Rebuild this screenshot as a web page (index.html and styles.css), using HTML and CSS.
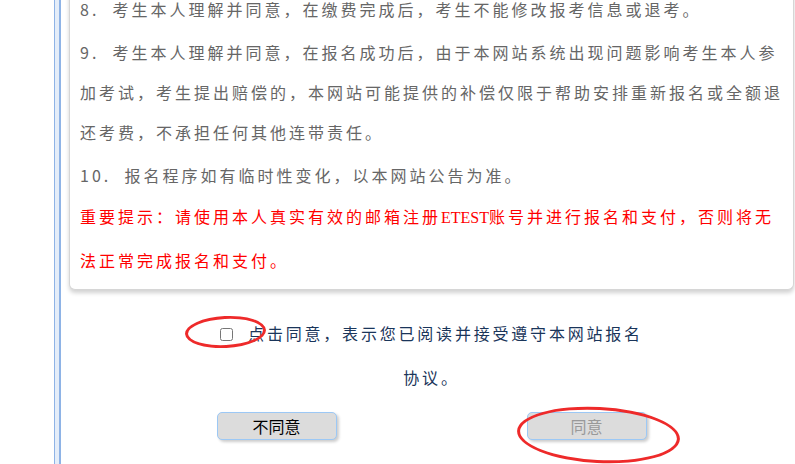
FILE: index.html
```html
<!DOCTYPE html>
<html lang="zh-CN">
<head>
<meta charset="UTF-8">
<title>报名协议</title>
<link rel="stylesheet" href="styles.css">
</head>
<body>
<div class="layout">
  <div class="side"></div>
  <div class="strip"></div>
  <main class="main">
    <!-- 协议内容 -->
    <div class="notice">
      <p>8.&nbsp; 考生本人理解并同意，在缴费完成后，考生不能修改报考信息或退考。</p>
      <p>9.&nbsp; 考生本人理解并同意，在报名成功后，由于本网站系统出现问题影响考生本人参加考试，考生提出赔偿的，本网站可能提供的补偿仅限于帮助安排重新报名或全额退还考费，不承担任何其他连带责任。</p>
      <p>10.&nbsp; 报名程序如有临时性变化，以本网站公告为准。</p>
      <p class="warn">重要提示：请使用本人真实有效的邮箱注册<span class="latin">ETEST</span>账号并进行报名和支付，否则将无法正常完成报名和支付。</p>
    </div>
    <!-- 同意 -->
    <div class="agree">
      <label class="agree-text"><span class="mark mark-chk"><input type="checkbox" class="chk"></span>点击同意，表示您已阅读并接受遵守本网站报名协议。</label>
      <div class="actions">
        <button class="btn">不同意</button>
        <span class="mark mark-btn"><button class="btn" disabled>同意</button></span>
      </div>
    </div>
  </main>
</div>
</body>
</html>
```

FILE: styles.css
```css
*{box-sizing:border-box;margin:0;padding:0}
body{background:#fff;font-family:"Noto Sans CJK SC","Noto Sans",sans-serif;overflow:hidden;height:464px}
.layout{display:flex;height:100%}
.side{width:54px;flex:none}
.strip{width:7px;flex:none;background:#e4edf9;border-left:1px solid #8eb3e6;border-right:2px solid #8eb3e6}
.main{flex:none;width:725px;margin-left:8px}
/* notice box */
.notice{margin-top:-11px;background:#fff;border:1px solid #d6d6d6;border-top:none;border-radius:0 0 6px 6px;box-shadow:0 3px 4px rgba(0,0,0,.18);padding:0 8px 5px 10px}
.notice p{font-size:16px;line-height:40px;letter-spacing:3px;color:#666;margin-bottom:3px}
.notice .warn{color:#f00;font-family:"Liberation Serif","Noto Sans CJK SC",serif;letter-spacing:3px;line-height:44px;margin-top:-2px;margin-bottom:0}
.notice .latin{letter-spacing:0}
/* agree */
.agree{display:flex;flex-direction:column;align-items:center;padding-top:21px}
.agree-text{width:430px;text-align:center;font-size:16px;line-height:44px;letter-spacing:2.8px;color:#1a355a}
.mark{position:relative;display:inline-block}
.mark::after{content:'';position:absolute;border:3px solid #ee2a2a;border-radius:50%;pointer-events:none}
.mark-chk{line-height:0;vertical-align:-1px;margin-right:15px}
.mark-chk::after{left:-35px;top:-12px;width:75px;height:26px;transform:rotate(-3deg)}
.chk{width:13px;height:13px;margin:0}
.actions{display:flex;gap:190px;margin-top:13px}
.btn{width:120px;height:28px;background:#dcdcdc;border:1px solid #9cc8f5;border-radius:5px;box-shadow:2px 2px 3px rgba(0,0,0,.2);font-family:"Noto Sans CJK SC",sans-serif;font-size:16px;color:#000}
.btn:disabled{color:#999}
.mark-btn{line-height:0}
.mark-btn::after{left:-10px;top:-5px;width:157px;height:50px;transform:rotate(3deg)}
```
